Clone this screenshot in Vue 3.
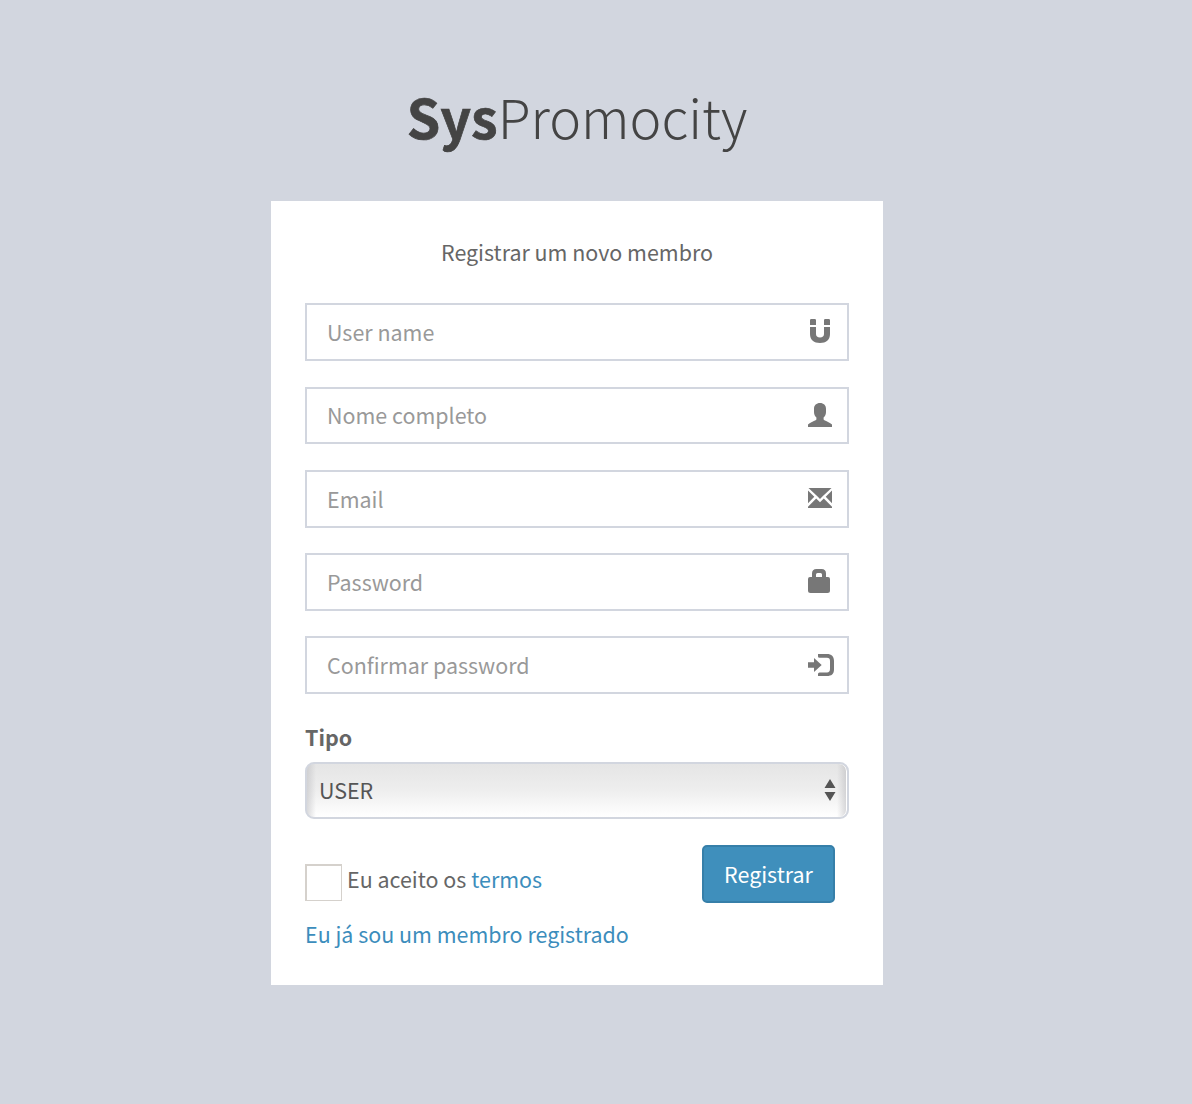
<script setup>
import { ref } from 'vue'

const fields = [
  { id: 'username', type: 'text', label: 'User name', icon: 'magnet' },
  { id: 'fullname', type: 'text', label: 'Nome completo', icon: 'user' },
  { id: 'email', type: 'email', label: 'Email', icon: 'envelope' },
  { id: 'password', type: 'password', label: 'Password', icon: 'lock' },
  { id: 'confirm', type: 'password', label: 'Confirmar password', icon: 'login' },
]
const role = ref('USER')
const accepted = ref(false)
</script>

<template>
  <main class="page">
    <div class="box">
      <h1 class="logo"><b>Sys</b><span>Promocity</span></h1>
      <form class="card" @submit.prevent>
        <p class="intro">Registrar um novo membro</p>
        <div v-for="f in fields" :key="f.id" class="field">
          <input :type="f.type" :placeholder="f.label" :aria-label="f.label" />
          <svg class="icon" width="28" height="28" viewBox="0 0 28 28" fill="#777" aria-hidden="true">
            <template v-if="f.icon === 'magnet'">
              <path d="M4 8V3.2Q4 2 5.2 2H8.8Q10 2 10 3.2V8ZM18 8V3.2Q18 2 19.2 2H22.8Q24 2 24 3.2V8Z" />
              <path d="M4 10H10V17C10 19.4 11.4 20.4 14 20.4S18 19.4 18 17V10H24V17C24 23 20 26 14 26S4 23 4 17Z" />
            </template>
            <path v-else-if="f.icon === 'user'" d="M14 2C17.6 2 20 4.2 20 7.8V11C20 13.4 19 15.3 17.6 16.6V18.4C18 19.6 25 21.5 26 23.6V26H2V23.6C3 21.5 10 19.6 10.4 18.4V16.6C9 15.3 8 13.4 8 11V7.8C8 4.2 10.4 2 14 2Z" />
            <template v-else-if="f.icon === 'envelope'">
              <path d="M2.5 4H25.5L16.4 12.5L14 15L11.6 12.5Z" />
              <path d="M2 6.6L8.3 12.8L2 19.2ZM26 6.6L19.7 12.8L26 19.2Z" />
              <path d="M2 24V22.7L10.2 14.6L14 18.2L17.8 14.6L26 22.7V24Z" />
            </template>
            <path v-else-if="f.icon === 'lock'" fill-rule="evenodd" d="M6 10V6.5Q6 2 10.5 2H15.5Q20 2 20 6.5V10H22Q24 10 24 12V23.5Q24 26 21.5 26H4.5Q2 26 2 23.5V12Q2 10 4 10ZM10 10H16V7.5Q16 6 14.5 6H11.5Q10 6 10 7.5Z" />
            <template v-else>
              <path d="M2 12.2H8V8L15.7 15L8 22V17.8H2Z" />
              <path d="M12 4H21C25.5 4 28 6.5 28 11V19.5C28 24 25.5 26 21 26H12V24Q12 22.4 13.5 22.4H21Q24 22.4 24 19V11Q24 7.8 21 7.8H13.5Q12 7.8 12 6.5Z" />
            </template>
          </svg>
        </div>
        <label class="label" for="role">Tipo</label>
        <div class="select">
          <select id="role" v-model="role">
            <option>USER</option>
          </select>
          <svg class="arrows" width="12" height="22" viewBox="0 0 12 22" fill="#555" aria-hidden="true">
            <path d="M6 0L11.5 9H.5ZM6 22L11.5 13H.5Z" />
          </svg>
        </div>
        <div class="actions">
          <label class="terms">
            <input v-model="accepted" type="checkbox" />
            <span class="accept">Eu aceito os</span> <a href="#">termos</a>
          </label>
          <button type="submit">Registrar</button>
        </div>
        <a class="member" href="#">Eu já sou um membro registrado</a>
      </form>
    </div>
  </main>
</template>

<style>
body {
  margin: 0;
  background: #d2d6df;
}
</style>

<style scoped>
.page {
  min-height: 1104px;
  box-sizing: border-box;
  background: #d2d6df;
  padding: 74px 0 0 271px;
  font-family: "Noto Sans CJK JP", "Noto Sans CJK SC", sans-serif;
  font-size: 21.45px;
  line-height: 34px;
  color: #666;
}
.page * {
  box-sizing: border-box;
}
.box {
  width: 612px;
}
.logo {
  margin: 0 0 43px;
  height: 84px;
  text-align: center;
  font-size: 53.7px;
  line-height: 84px;
  font-weight: 300;
  color: #444;
}
.logo b {
  font-weight: 700;
  -webkit-text-stroke: 0.7px #444;
}
.card {
  height: 784px;
  padding: 34px;
  background: #fff;
}
.intro {
  margin: 0 0 34.35px;
  text-align: center;
}
.field {
  position: relative;
  height: 57.8px;
  margin-bottom: 25.45px;
}
.field input {
  display: block;
  width: 100%;
  height: 100%;
  padding: 0 60px 1px 20px;
  border: 2px solid #d2d6df;
  border-radius: 0;
  outline: 0;
  background: #fff;
  font: inherit;
  color: #555;
}
.field input::placeholder {
  color: #999;
  opacity: 1;
}
.icon {
  position: absolute;
  right: 15px;
  top: 14px;
}
.label {
  display: block;
  margin-bottom: 8.25px;
  font-weight: 700;
}
.select {
  position: relative;
  height: 57px;
}
.select select {
  appearance: none;
  display: block;
  width: 100%;
  height: 100%;
  margin: 0;
  padding: 0 40px 0 12px;
  border: 2px solid #d2d6df;
  border-radius: 9px;
  outline: 0;
  background:
    linear-gradient(to right, #b8b8bc80, #fff0) left / 9px 100% no-repeat,
    linear-gradient(to left, #b8b8bc90, #fff0) right / 10px 100% no-repeat,
    linear-gradient(#e5e5e5, #eee 50%, #fff);
  box-shadow: inset -1px 0 0 0 #fff;
  font: inherit;
  color: #555;
}
.arrows {
  position: absolute;
  right: 13px;
  top: 17px;
}
.actions {
  display: flex;
  justify-content: space-between;
  height: 58px;
  margin-top: 26px;
  padding-right: 14px;
}
.terms {
  display: flex;
  align-items: flex-start;
  padding-top: 17px;
}
.terms input {
  appearance: none;
  width: 37px;
  height: 37px;
  margin: 2px 0 0;
  border: solid #d5d1cc;
  border-width: 2px 1px 1px 2px;
  background: #fff;
}
.accept {
  margin: 0 5px;
}
a {
  color: #3c8dbc;
  text-decoration: none;
}
button {
  width: 133px;
  height: 58px;
  padding: 0;
  border: 2px solid #367fa9;
  border-radius: 5px;
  background: #3f8fbc;
  font: inherit;
  color: #fff;
}
.member {
  display: block;
  margin-top: 14px;
}
</style>
